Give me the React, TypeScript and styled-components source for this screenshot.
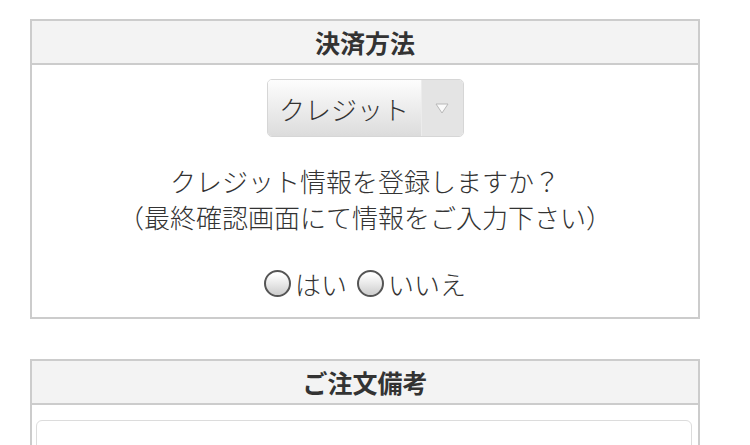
import React from "react";
import styled, { createGlobalStyle } from "styled-components";

const Global = createGlobalStyle`
  html, body { margin: 0; padding: 0; background: #fff; }
  body {
    font-family: "Noto Sans CJK JP", "Noto Sans", sans-serif;
    color: #333;
  }
`;

const Page = styled.div`
  padding: 19px 0 0 30px;
  display: flex;
  flex-direction: column;
  gap: 40px;
`;

const Panel = styled.section`
  width: 670px;
  box-sizing: border-box;
  border: 2px solid #cccccc;
  display: flex;
  flex-direction: column;
`;

const PanelHeader = styled.h2`
  margin: 0;
  height: 42px;
  box-sizing: content-box;
  border-bottom: 2px solid #cccccc;
  background: #f3f3f3;
  display: flex;
  align-items: center;
  justify-content: center;
  font-size: 25px;
  font-weight: 700;
  color: #333;
`;

const PanelBody = styled.div`
  display: flex;
  flex-direction: column;
  align-items: center;
  padding: 14px 0 16px;
`;

const SelectBox = styled.div`
  width: 197px;
  height: 58px;
  box-sizing: border-box;
  border: 1px solid #d6d6d6;
  border-radius: 5px;
  display: flex;
  overflow: hidden;
`;

const SelectValue = styled.div`
  flex: 1;
  display: flex;
  align-items: center;
  justify-content: center;
  font-size: 26px;
  font-weight: 300;
  color: #333;
  background: linear-gradient(#fdfdfd, #dcdcdc);
  border-right: 1px solid #ececec;
`;

const SelectArrow = styled.div`
  width: 41px;
  display: flex;
  align-items: center;
  justify-content: center;
  background: #e4e4e4;
`;

const Message = styled.p`
  margin: 26px 0 0;
  font-size: 26px;
  font-weight: 300;
  line-height: 36px;
  text-align: center;
  color: #333;
`;

const RadioRow = styled.div`
  margin-top: 30px;
  height: 36px;
  display: flex;
  align-items: center;
  gap: 10px;
  font-size: 26px;
  font-weight: 300;
  color: #333;
`;

const RadioLabel = styled.label`
  display: flex;
  align-items: center;
  gap: 4px;
`;

const Radio = styled.input`
  appearance: none;
  flex-shrink: 0;
  margin: 0;
  width: 27px;
  height: 27px;
  border-radius: 50%;
  border: 2px solid #555;
  background: linear-gradient(#ffffff 10%, #cdcdcd);
  box-sizing: border-box;
`;

const NoteBody = styled.div`
  padding: 15px 6px 0 4px;
`;

const NoteArea = styled.textarea`
  display: block;
  width: 100%;
  height: 110px;
  box-sizing: border-box;
  border: 1px solid #dcdcdc;
  border-radius: 6px;
  resize: none;
  outline: none;
`;

export default function App() {
  return (
    <>
      <Global />
      <Page>
        <Panel>
          <PanelHeader>決済方法</PanelHeader>
          <PanelBody>
            <SelectBox>
              <SelectValue>クレジット</SelectValue>
              <SelectArrow>
                <svg width="14" height="11" viewBox="0 0 14 11">
                  <path d="M1 1 L13 1 L7 10 Z" fill="#fafafa" stroke="#b8b8b8" strokeWidth="1" strokeLinejoin="round" />
                </svg>
              </SelectArrow>
            </SelectBox>
            <Message>
              クレジット情報を登録しますか？
              <br />
              （最終確認画面にて情報をご入力下さい）
            </Message>
            <RadioRow>
              <RadioLabel>
                <Radio type="radio" name="credit" />
                はい
              </RadioLabel>
              <RadioLabel>
                <Radio type="radio" name="credit" />
                いいえ
              </RadioLabel>
            </RadioRow>
          </PanelBody>
        </Panel>
        <Panel>
          <PanelHeader>ご注文備考</PanelHeader>
          <NoteBody>
            <NoteArea />
          </NoteBody>
        </Panel>
      </Page>
    </>
  );
}
